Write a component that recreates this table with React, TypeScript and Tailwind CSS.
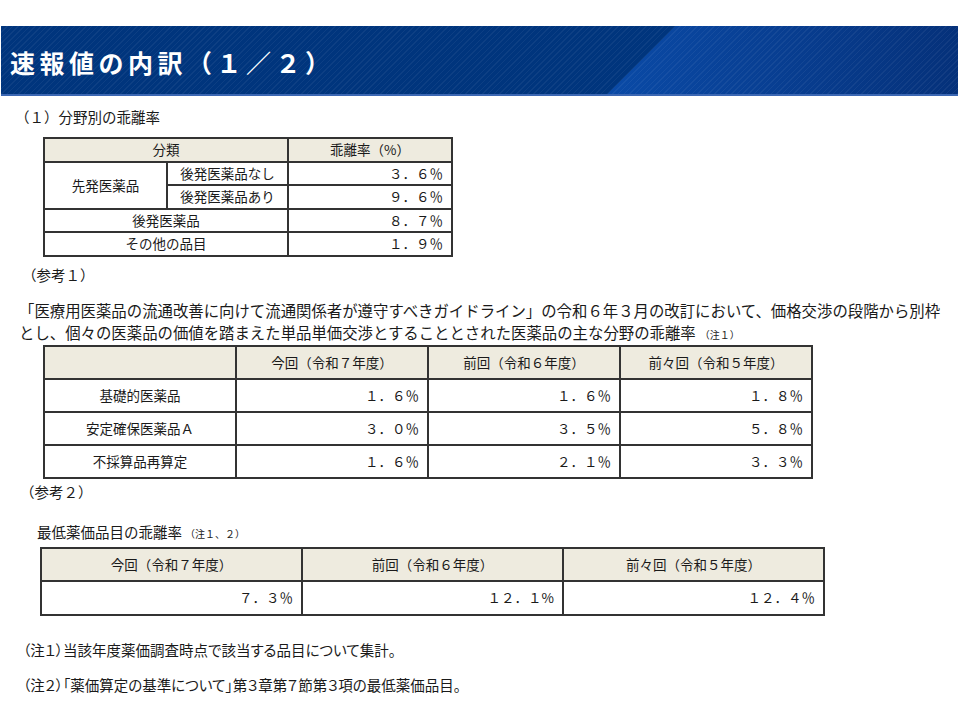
const jp = "font-['Noto_Sans_CJK_JP','Noto_Sans',sans-serif]";

const cell = "border-2 border-[#333333] px-2 text-[13.5px] leading-none text-[#1a1a1a]";
const head = "bg-[#eeebdf] text-center";

function Banner() {
	return (
		<div className="ml-[1px] w-[957px] h-[70px] border-b-2 border-[#3b67b3] flex items-center bg-[repeating-linear-gradient(135deg,rgba(255,255,255,0.05)_0px,rgba(255,255,255,0.05)_1px,transparent_1px,transparent_4px),linear-gradient(135deg,#00357d_0px,#00357d_477px,transparent_477px),linear-gradient(90deg,#0a4ba8_62%,#083f93_80%,#05317a_100%)]">
			<h1 className="pl-[9px] pt-[5px] text-[25px] font-bold tracking-[4.5px] text-white">
				速報値の内訳（１／２）
			</h1>
		</div>
	);
}

function Breakdown() {
	return (
		<table className="ml-[43px] mt-[10px] w-[410px] table-fixed">
			<colgroup>
				<col className="w-[123px]" />
				<col className="w-[121px]" />
				<col />
			</colgroup>
			<tbody>
				<tr className="h-[24px]">
					<td colSpan={2} className={`${cell} ${head}`}>分類</td>
					<td className={`${cell} ${head}`}>乖離率（%）</td>
				</tr>
				<tr className="h-[23px]">
					<td rowSpan={2} className={`${cell} text-center`}>先発医薬品</td>
					<td className={`${cell} text-center`}>後発医薬品なし</td>
					<td className={`${cell} text-right`}>３．６％</td>
				</tr>
				<tr className="h-[24px]">
					<td className={`${cell} text-center`}>後発医薬品あり</td>
					<td className={`${cell} text-right`}>９．６％</td>
				</tr>
				<tr className="h-[23px]">
					<td colSpan={2} className={`${cell} text-center`}>後発医薬品</td>
					<td className={`${cell} text-right`}>８．７％</td>
				</tr>
				<tr className="h-[24px]">
					<td colSpan={2} className={`${cell} text-center`}>その他の品目</td>
					<td className={`${cell} text-right`}>１．９％</td>
				</tr>
			</tbody>
		</table>
	);
}

const categories = [
	{ name: "基礎的医薬品", now: "１．６％", prev: "１．６％", prev2: "１．８％" },
	{ name: "安定確保医薬品Ａ", now: "３．０％", prev: "３．５％", prev2: "５．８％" },
	{ name: "不採算品再算定", now: "１．６％", prev: "２．１％", prev2: "３．３％" },
];

function Categories() {
	return (
		<table className="ml-[43px] mt-[2px] w-[770px] table-fixed">
			<tbody>
				<tr className="h-[33px]">
					<td className={`${cell} ${head}`}></td>
					<td className={`${cell} ${head}`}>今回（令和７年度）</td>
					<td className={`${cell} ${head}`}>前回（令和６年度）</td>
					<td className={`${cell} ${head}`}>前々回（令和５年度）</td>
				</tr>
				{categories.map((row, index) => {
					return (
						<tr key={index} className="h-[33px]">
							<td className={`${cell} text-center`}>{row.name}</td>
							<td className={`${cell} text-right`}>{row.now}</td>
							<td className={`${cell} text-right`}>{row.prev}</td>
							<td className={`${cell} text-right`}>{row.prev2}</td>
						</tr>
					);
				})}
			</tbody>
		</table>
	);
}

function Lowest() {
	return (
		<table className="ml-[40px] mt-[5px] w-[785px] table-fixed">
			<tbody>
				<tr className="h-[33px]">
					<td className={`${cell} ${head}`}>今回（令和７年度）</td>
					<td className={`${cell} ${head}`}>前回（令和６年度）</td>
					<td className={`${cell} ${head}`}>前々回（令和５年度）</td>
				</tr>
				<tr className="h-[34px]">
					<td className={`${cell} text-right`}>７．３％</td>
					<td className={`${cell} text-right`}>１２．１%</td>
					<td className={`${cell} text-right`}>１２．４％</td>
				</tr>
			</tbody>
		</table>
	);
}

export default function App() {
	return (
		<div className={`${jp} w-[960px] h-[720px] bg-white pt-[26px] text-[#1a1a1a] overflow-hidden`}>
			<Banner />
			<p className="pl-[15px] mt-[11px] text-[14.5px] leading-[20px]">（１）分野別の乖離率</p>
			<Breakdown />
			<p className="pl-[22px] mt-[8px] text-[14.5px] leading-[20px]">（参考１）</p>
			<p className="pl-[19px] mt-[14px] text-[15.4px] leading-[22px] whitespace-nowrap">
				「医療用医薬品の流通改善に向けて流通関係者が遵守すべきガイドライン」の令和６年３月の改訂において、価格交渉の段階から別枠
				<br />
				とし、個々の医薬品の価値を踏まえた単品単価交渉とすることとされた医薬品の主な分野の乖離率
				<span className="text-[10px] leading-none ml-[4px]">（注１）</span>
			</p>
			<Categories />
			<p className="pl-[20px] mt-[3px] text-[14.5px] leading-[20px]">（参考２）</p>
			<p className="pl-[37px] mt-[20px] text-[14.5px] leading-[20px]">
				最低薬価品目の乖離率<span className="text-[10px] leading-none ml-[3px]">（注１、２）</span>
			</p>
			<Lowest />
			<p className="pl-[23px] mt-[24px] text-[14.5px] leading-[20px] [font-feature-settings:'palt']">（注１）当該年度薬価調査時点で該当する品目について集計。</p>
			<p className="pl-[23px] mt-[15px] text-[14.5px] leading-[20px] [font-feature-settings:'palt']">（注２）「薬価算定の基準について」第３章第７節第３項の最低薬価品目。</p>
		</div>
	);
}
